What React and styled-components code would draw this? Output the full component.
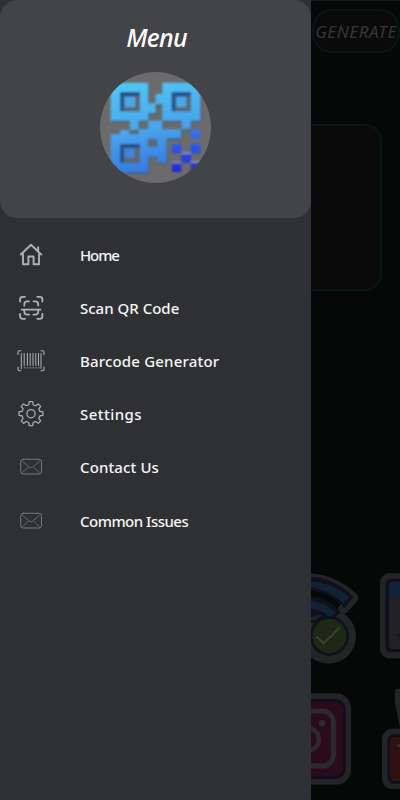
import React from 'react';
import styled, { createGlobalStyle } from 'styled-components';

const items = [
  { name: 'Home', icon: HomeIcon, spacing: -1.1 },
  { name: 'Scan QR Code', icon: ScanIcon, spacing: 0 },
  { name: 'Barcode Generator', icon: BarcodeIcon, spacing: 0.18 },
  { name: 'Settings', icon: GearIcon, spacing: 0.45 },
  { name: 'Contact Us', icon: MailIcon, spacing: 0.12 },
  { name: 'Common Issues', icon: MailIcon, spacing: -0.5 },
];

function HomeIcon() {
  return (
    <Icon viewBox="0 0 32 32" $width={1.9}>
      <path d="M5.800 15.500 16 5.800l10.200 9.700M23.200 11.800V8.200M8 14.500v10.800h5.400v-7.800h5.200v7.800H24V14.500" />
    </Icon>
  );
}

function ScanIcon() {
  return (
    <Icon viewBox="0 0 32 32" $width={1.8}>
      <path d="M5.100 9.500V7.300Q5.100 4.800 7.600 4.800H10M22.300 4.800h2.500q2.600 0 2.600 2.500V9.500M27.400 22v2.300q0 2.500-2.600 2.500H22.300M10 26.800H7.600Q5.100 26.800 5.100 24.300V22" />
      <path d="M9.300 13.500v-1.200q0-3 3-3h1.700M18.500 9.300h1.700q3 0 3 3v1.200M23.200 17.800v2q0 2.800-3 2.800h-1.900M14.200 22.600h-1.900q-3 0-3-2.800v-2M6.800 17.700h18.700" />
    </Icon>
  );
}

function BarcodeIcon() {
  return (
    <Icon viewBox="0 0 32 32" $width={1.1}>
      <path d="M6 5.800H4.500Q3 5.800 3 7.300V9.500M26 5.800h1.500Q29 5.800 29 7.300V9.500M3 22v2.200q0 1.500 1.500 1.500H6M29 22v2.200q0 1.500-1.500 1.500H26" />
      <path strokeWidth="1" d="M6.300 8.500v15M9.200 8.500v12M12.400 8.500v12M15.200 8.500v12M18 8.500v12M20.800 8.500v12M23.500 8.500v12M26 8.500v15" />
      <path strokeWidth=".8" strokeDasharray=".8 2.1" d="M9.200 22.800h15" />
    </Icon>
  );
}

function GearIcon() {
  return (
    <Icon viewBox="0 0 32 32" $width={1.25}>
      <path
        transform="translate(.6 -.2) scale(.96)"
        d="M14.200 4h3.600l.5 3.200 2.600 1.100 2.700-1.900 2.500 2.500-1.900 2.700 1.100 2.600 3.200.5v3.600l-3.200.5-1.100 2.600 1.900 2.700-2.500 2.500-2.700-1.900-2.600 1.100-.5 3.200h-3.600l-.5-3.200-2.600-1.100-2.700 1.900-2.500-2.500 1.900-2.700-1.100-2.600-3.200-.5v-3.600l3.200-.5 1.100-2.600-1.900-2.700 2.500-2.500 2.700 1.900 2.600-1.100z"
      />
      <circle cx="16" cy="15.700" r="4.100" />
    </Icon>
  );
}

function MailIcon() {
  return (
    <Icon viewBox="0 0 32 32" $width={0.8} $dim>
      <rect x="5.700" y="8.300" width="20.800" height="14.700" rx="2.500" strokeWidth="1" />
      <path d="m7.500 10.300 7.100 6q1.400 1 2.800 0l7.100-6M7.800 21.300l5.400-5M24.200 21.300l-5.400-5" />
    </Icon>
  );
}

function QrLogo() {
  return (
    <Avatar viewBox="30 186 333 333">
      <defs>
        <linearGradient id="qr" gradientUnits="userSpaceOnUse" x1="170" y1="218" x2="225" y2="488">
          <stop offset="0" stopColor="#50c5f4" />
          <stop offset=".5" stopColor="#48a5ed" />
          <stop offset="1" stopColor="#3473dc" />
        </linearGradient>
        <linearGradient id="dots" gradientUnits="userSpaceOnUse" x1="0" y1="355" x2="0" y2="485">
          <stop offset="0" stopColor="#3c7aec" />
          <stop offset=".5" stopColor="#2950e8" />
          <stop offset="1" stopColor="#2028d0" />
        </linearGradient>
        <filter id="soft" x="-10%" y="-10%" width="120%" height="120%">
          <feGaussianBlur stdDeviation="2.400" />
        </filter>
        <clipPath id="round">
          <circle cx="196.500" cy="352.500" r="166.500" />
        </clipPath>
      </defs>
      <circle cx="196.500" cy="352.500" r="166.500" fill="#6b6b6c" />
      <g clipPath="url(#round)">
        <g filter="url(#soft)">
          <path
            transform="translate(3 5)"
            fill="#34536f"
            opacity=".6"
            d="M62 218h113v62h22v30h-22v22h-29v28h-26v-28H62zM217 218h114v114h-29v26h-27v-26h-58v-50h-20v-30h20zM62 373h28v-13h28v13h28v-15h29v-26h42v26h56v27h-43v73h-27v-18h-28v48H62z"
          />
          <path
            fill="url(#qr)"
            d="M62 218h113v62h22v30h-22v22h-29v28h-26v-28H62zM217 218h114v114h-29v26h-27v-26h-58v-50h-20v-30h20zM62 373h28v-13h28v13h28v-15h29v-26h42v26h56v27h-43v73h-27v-18h-28v48H62z"
          />
          <path fill="#596a78" d="M173 386h29v25h-29z" />
          <path fill="#214f8c" d="M90 246h60v58H90zM245 246h58v58h-58zM90 402h60v56H90z" />
          <path fill="#5b6770" d="M101 258h49v46h-49zM256 258h47v46h-47zM101 413h49v45h-49z" />
          <path fill="#47a8ee" d="M104 261h31v30h-31zM259 261h30v30h-30z" />
          <path fill="#3c85e3" d="M104 416h30v27h-30z" />
          <path fill="url(#dots)" d="M303 359h28v28h-28zM246 402h28v28h28v-28h29v28h-28v28h28v28h-28v-28h-29v28h-28v-28h28v-28h-28z" />
          <path fill="#8c8fae" d="M274 427h28v5h-28zM246 455h28v5h-28zM303 453h28v5h-28z" />
        </g>
      </g>
    </Avatar>
  );
}

function WifiSticker() {
  return (
    <Sticker viewBox="63 0 168 360" $width={56}>
      <path d="M20 56Q115 45 190 114L160 146" stroke="#232426" strokeWidth="31" />
      <circle cx="116" cy="229" r="82" fill="#232426" />
      <path d="M40 50Q125 45 190 110L163 145Q105 82 30 92zM40 110Q105 100 151 158L120 185 40 190z" fill="#0f0f1e" />
      <path d="M40 64Q118 60 178 112L161 130Q110 80 40 80z" fill="#112235" />
      <path d="M40 124Q100 118 138 158L119 173Q95 146 40 144z" fill="#112235" />
      <path d="M63 174q14-13 34-8l-20 14H63z" fill="#212226" />
      <circle cx="118" cy="228" r="59" fill="#0f0f1e" />
      <circle cx="118" cy="228" r="51" fill="#1e2913" />
      <path d="m81 232 20 18 46-46" stroke="#394039" strokeWidth="6" />
    </Sticker>
  );
}

function WindowSticker() {
  return (
    <Sticker viewBox="231 0 99 360" $width={33}>
      <rect x="270" y="40" width="120" height="255" rx="28" fill="#232426" />
      <rect x="286" y="56" width="120" height="221" rx="16" fill="#0f0f1e" />
      <path d="M297 78q0-12 12-12h40v46h-52z" fill="#11223a" />
      <path d="M297 112h50v155h-38q-12 0-12-12z" fill="#222226" />
      <path d="M321 222h12v9h-12z" fill="#151525" />
    </Sticker>
  );
}

function CameraSticker() {
  return (
    <Sticker viewBox="63 0 168 360" $width={56}>
      <rect x="-70" y="40" width="253" height="274" rx="44" fill="#232426" />
      <rect x="-54" y="57" width="221" height="240" rx="31" fill="#120b1e" />
      <rect x="-46" y="65" width="206" height="224" rx="24" fill="#290b19" />
      <rect x="-20" y="94" width="150" height="164" rx="32" stroke="#2b2a2d" strokeWidth="15" />
      <circle cx="54" cy="178" r="33" stroke="#2b2a2d" strokeWidth="14" />
      <circle cx="96" cy="130" r="10" fill="#2b2a2d" />
    </Sticker>
  );
}

function TvSticker() {
  return (
    <Sticker viewBox="231 0 99 360" $width={33}>
      <path d="M323 34v32l18 90" stroke="#232426" strokeWidth="17" />
      <rect x="276" y="146" width="130" height="181" rx="32" fill="#232426" />
      <rect x="292" y="162" width="120" height="150" rx="20" fill="#0f0f1e" />
      <rect x="301" y="171" width="110" height="132" rx="14" fill="#30110f" />
      <path d="M320 200q1-9 11-9v12z" fill="#333033" />
    </Sticker>
  );
}

export default function App() {
  return (
    <Screen>
      <GlobalStyle />
      <Page>
        <GenerateButton>GENERATE</GenerateButton>
        <Preview />
        <StickerRow>
          <WifiSticker />
          <WindowSticker />
        </StickerRow>
        <StickerRow>
          <CameraSticker />
          <TvSticker />
        </StickerRow>
      </Page>
      <Drawer>
        <DrawerHeader>
          <Title>Menu</Title>
          <QrLogo />
        </DrawerHeader>
        <Nav>
          {items.map(({ name, icon: ItemIcon, spacing }) => (
            <NavItem key={name}>
              <ItemIcon />
              <Label $spacing={spacing}>{name}</Label>
            </NavItem>
          ))}
        </Nav>
      </Drawer>
    </Screen>
  );
}

const GlobalStyle = createGlobalStyle`
  * {
    box-sizing: border-box;
  }
  body {
    margin: 0;
    background: #050807;
    font-family: 'Noto Sans', 'Open Sans', sans-serif;
  }
`
const Screen = styled.div`
  position: relative;
  width: 400px;
  height: 800px;
  overflow: hidden;
`
const Page = styled.main`
  display: flex;
  flex-direction: column;
  align-items: flex-end;
  height: 100%;
  padding-top: 8px;
  background: #050807;
  border-top: 1px solid #19191b;
`
const GenerateButton = styled.button`
  display: flex;
  align-items: center;
  justify-content: center;
  width: 88px;
  height: 44px;
  flex-shrink: 0;
  padding: 0;
  border: 2px solid #071715;
  border-radius: 20px;
  background: #0a0a0b;
  color: #363637;
  font: italic 400 17px 'Noto Sans', sans-serif;
  letter-spacing: 0.6px;
  white-space: nowrap;
`
const Preview = styled.section`
  width: 364px;
  height: 167px;
  flex-shrink: 0;
  margin: 71px 18px 269px 0;
  border: 2px solid #071513;
  border-radius: 17px;
  background: #0a0a0b;
`
const StickerRow = styled.div`
  display: flex;
  height: 120px;
  flex-shrink: 0;
`
const Sticker = styled.svg`
  width: ${(props) => props.$width}px;
  height: 120px;
  fill: none;
  stroke-linejoin: round;
  stroke-linecap: round;
`
const Drawer = styled.aside`
  position: absolute;
  top: 0;
  left: 0;
  width: 311px;
  height: 100%;
  background: #2f3033;
`
const DrawerHeader = styled.header`
  display: flex;
  flex-direction: column;
  align-items: center;
  height: 218px;
  border-radius: 17px;
  background: #434447;
`
const Title = styled.h1`
  height: 72px;
  margin: 0;
  padding-left: 2px;
  color: #fff;
  font-size: 25px;
  font-style: italic;
  font-weight: 500;
  line-height: 74px;
  letter-spacing: -0.7px;
`
const Avatar = styled.svg`
  width: 111px;
  height: 111px;
`
const Nav = styled.nav`
  display: flex;
  flex-direction: column;
  padding-top: 10px;
`
const NavItem = styled.a`
  display: flex;
  align-items: center;
  gap: 33px;
  height: 53.2px;
  padding-left: 15px;
`
const Icon = styled.svg`
  width: 32px;
  height: 32px;
  flex-shrink: 0;
  fill: none;
  stroke: ${(props) => (props.$dim ? '#77787b' : '#b0b1b3')};
  stroke-width: ${(props) => props.$width};
  stroke-linecap: round;
  stroke-linejoin: round;
`
const Label = styled.span`
  color: #f6f6f7;
  font-size: 15px;
  font-weight: 500;
  letter-spacing: ${(props) => props.$spacing}px;
  white-space: nowrap;
`
